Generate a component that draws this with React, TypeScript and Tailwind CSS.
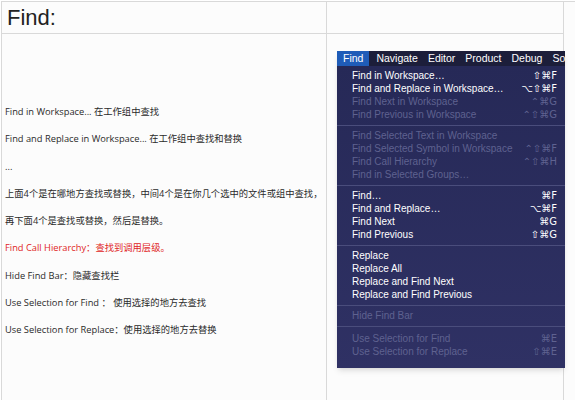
type Item = { label: string; key?: string; off?: boolean }

const groups: Item[][] = [
  [
    { label: "Find in Workspace…", key: "⇧⌘F" },
    { label: "Find and Replace in Workspace…", key: "⌥⇧⌘F" },
    { label: "Find Next in Workspace", key: "⌃⌘G", off: true },
    { label: "Find Previous in Workspace", key: "⌃⇧⌘G", off: true },
  ],
  [
    { label: "Find Selected Text in Workspace", off: true },
    { label: "Find Selected Symbol in Workspace", key: "⌃⇧⌘F", off: true },
    { label: "Find Call Hierarchy", key: "⌃⇧⌘H", off: true },
    { label: "Find in Selected Groups…", off: true },
  ],
  [
    { label: "Find…", key: "⌘F" },
    { label: "Find and Replace…", key: "⌥⌘F" },
    { label: "Find Next", key: "⌘G" },
    { label: "Find Previous", key: "⇧⌘G" },
  ],
  [
    { label: "Replace" },
    { label: "Replace All" },
    { label: "Replace and Find Next" },
    { label: "Replace and Find Previous" },
  ],
  [{ label: "Hide Find Bar", off: true }],
  [
    { label: "Use Selection for Find", key: "⌘E", off: true },
    { label: "Use Selection for Replace", key: "⇧⌘E", off: true },
  ],
]

const notes = [
  { text: "Find in Workspace... 在工作组中查找" },
  { text: "Find and Replace in Workspace... 在工作组中查找和替换" },
  { text: "..." },
  { text: "上面4个是在哪地方查找或替换，中间4个是在你几个选中的文件或组中查找，" },
  { text: "再下面4个是查找或替换，然后是替换。" },
  { text: "Find Call Hierarchy：查找到调用层级。", red: true },
  { text: "Hide Find Bar：隐藏查找栏" },
  { text: "Use Selection for Find ： 使用选择的地方去查找" },
  { text: "Use Selection for Replace：使用选择的地方去替换" },
]

function FindMenu() {
  return (
    <div className="w-[228px] ml-[10px] mt-[17px] font-['Liberation_Sans','DejaVu_Sans',sans-serif] text-[10px] leading-[13px] shadow-md">
      {/* menu bar */}
      <div className="flex h-[15px] items-center bg-[#1c1e3a] text-white text-[10.5px] whitespace-nowrap overflow-hidden">
        <span className="bg-[#1f5cb8] h-full flex items-center px-[6px]">Find</span>
        <span className="ml-[7px]">Navigate</span>
        <span className="ml-[10px]">Editor</span>
        <span className="ml-[10px]">Product</span>
        <span className="ml-[10px]">Debug</span>
        <span className="ml-[10px]">So</span>
      </div>
      {/* menu body */}
      <div className="bg-gradient-to-b from-[#262957] to-[#2f3164] pt-[3px] pb-[10px]">
        {groups.map((g, gi) => (
          <div key={gi}>
            {gi > 0 && (
              <div className={"h-px bg-[#4a4d7c] " + (gi === 5 ? "mt-[4px] mb-[5px]" : "my-[3.5px]")} />
            )}
            {g.map((it) => (
              <div
                key={it.label}
                className={
                  "flex justify-between pl-[15px] pr-[8px] whitespace-nowrap " +
                  (it.off ? "text-[#5f6290]" : "text-white")
                }
              >
                <span>{it.label}</span>
                <span className="font-['DejaVu_Sans',sans-serif] text-[10px]">{it.key}</span>
              </div>
            ))}
          </div>
        ))}
      </div>
    </div>
  )
}

export default function App() {
  return (
    <div className="w-[575px] h-[400px] overflow-hidden bg-white pl-px pt-px">
      <div className="grid grid-cols-[325px_237px] grid-rows-[32px_400px] border-l border-t border-[#d9d9d9] bg-[#fcfcfc]">
        <div className="border-r border-b border-[#d9d9d9] flex items-center pl-[5px]">
          <h1 className="font-['Liberation_Sans',sans-serif] text-[22px] text-[#222]">Find:</h1>
        </div>
        <div className="border-r border-b border-[#d9d9d9]" />
        <div className="border-r border-[#d9d9d9] pt-[71px] pl-[3px] font-['Open_Sans','Noto_Sans_CJK_SC',sans-serif] text-[9.3px] leading-[14px] flex flex-col gap-[13.3px]">
          {notes.map((n) => (
            <p key={n.text} className={n.red ? "text-[#e02424]" : "text-[#2a2a2a]"}>
              {n.text}
            </p>
          ))}
        </div>
        <div className="border-r border-[#d9d9d9]">
          <FindMenu />
        </div>
      </div>
    </div>
  )
}
